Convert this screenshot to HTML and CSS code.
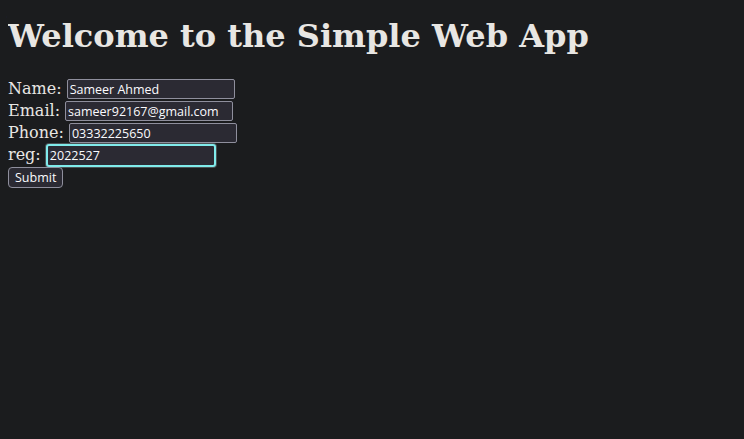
FILE: index.html
```html
<!DOCTYPE html>
<html>
<head>
<meta charset="utf-8">
<title>Simple Web App</title>
<link rel="stylesheet" href="styles.css">
</head>
<body class="page">
<h1 class="title">Welcome to the Simple Web App</h1>
<form class="form">
<label class="lbl" for="name">Name:</label> <input class="field" id="name" type="text" value="Sameer Ahmed"><br>
<label class="lbl" for="email">Email:</label> <input class="field" id="email" type="text" value="sameer92167@gmail.com"><br>
<label class="lbl" for="phone">Phone:</label> <input class="field" id="phone" type="text" value="03332225650"><br>
<label class="lbl" for="reg">reg:</label> <input class="field focused" id="reg" type="text" value="2022527"><br>
<button class="btn" type="button">Submit</button>
</form>
</body>
</html>
```
FILE: styles.css
```css
html { background: #1b1c1e; }
.page {
  margin: 8px;
  background: #1b1c1e;
  color: #e8e6e3;
  font-family: "DejaVu Serif", serif;
  font-size: 16px;
}
.title {
  font-family: "DejaVu Serif", serif;
  font-weight: bold;
  font-size: 32px;
  margin: 8.5px 0 23.5px;
}
.form { margin: 0; }
.lbl { color: #e8e6e3; }
.field {
  font-family: "Open Sans", sans-serif;
  font-size: 12.5px;
  color: #fbfbfe;
  background: #2b2a33;
  border: 1px solid #8f8f9d;
  border-radius: 2px;
  padding: 1px 2px;
  width: 168px;
  box-sizing: border-box;
  height: 20px;
  margin: 1px 0;
  outline: none;
}
.focused {
  border: 2px solid #80ebeb;
  box-shadow: 0 0 0 1px #4a5255;
  border-radius: 3px;
  width: 170px;
  height: 23px;
  padding: 1px 2px;
  margin: 0;
}
.btn {
  font-family: "Open Sans", sans-serif;
  font-size: 12.5px;
  color: #fbfbfe;
  background: #2b2a33;
  border: 1px solid #8f8f9d;
  border-radius: 4px;
  padding: 1px 6px;
  height: 21px;
}
```
